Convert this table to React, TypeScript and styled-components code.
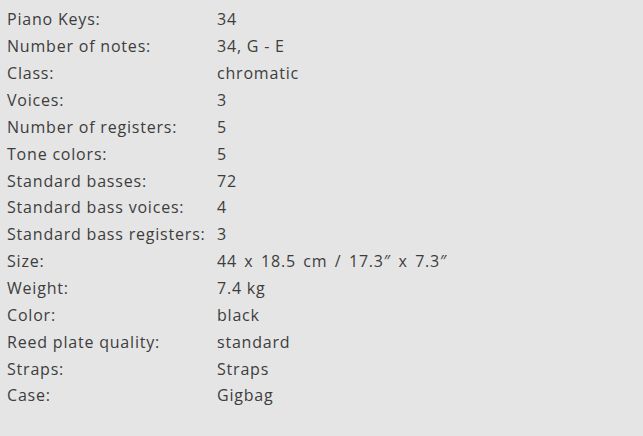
import React from "react";
import styled, { createGlobalStyle } from "styled-components";

const GlobalStyle = createGlobalStyle`
  html, body {
    margin: 0;
    padding: 0;
    background: #e5e5e5;
  }
`;

const Sheet = styled.div`
  width: 643px;
  height: 436px;
  box-sizing: border-box;
  padding: 6px 0 0 7px;
  background: #e5e5e5;
  font-family: "Open Sans", "Liberation Sans", sans-serif;
  font-size: 16px;
  letter-spacing: 0.8px;
  color: #3d3d3d;
`;

const SpecList = styled.dl`
  margin: 0;
  display: grid;
  grid-template-columns: 210px auto;
  grid-auto-rows: 26.86px;
  align-items: center;
`;

const SpecName = styled.dt`
  margin: 0;
  white-space: nowrap;
`;

const SpecValue = styled.dd<{ $wide?: boolean }>`
  margin: 0;
  white-space: nowrap;
  word-spacing: ${(p) => (p.$wide ? "2.5px" : "0")};
`;

const specs: [string, string][] = [
  ["Piano Keys:", "34"],
  ["Number of notes:", "34, G - E"],
  ["Class:", "chromatic"],
  ["Voices:", "3"],
  ["Number of registers:", "5"],
  ["Tone colors:", "5"],
  ["Standard basses:", "72"],
  ["Standard bass voices:", "4"],
  ["Standard bass registers:", "3"],
  ["Size:", "44 x 18.5 cm / 17.3\u2033 x 7.3\u2033"],
  ["Weight:", "7.4 kg"],
  ["Color:", "black"],
  ["Reed plate quality:", "standard"],
  ["Straps:", "Straps"],
  ["Case:", "Gigbag"],
];

export default function App() {
  return (
    <Sheet>
      <GlobalStyle />
      <SpecList>
        {specs.map(([name, value]) => (
          <React.Fragment key={name}>
            <SpecName>{name}</SpecName>
            <SpecValue $wide={name === "Size:"}>{value}</SpecValue>
          </React.Fragment>
        ))}
      </SpecList>
    </Sheet>
  );
}
